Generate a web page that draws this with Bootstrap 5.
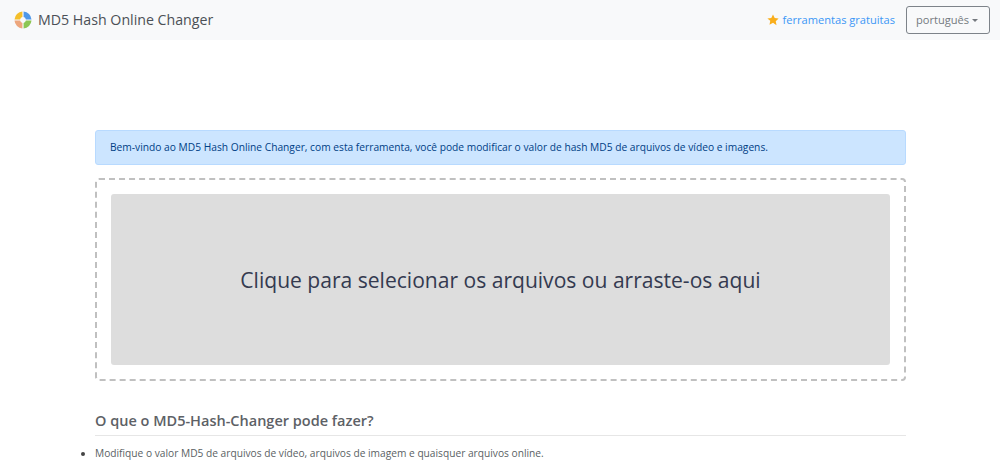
<!DOCTYPE html>
<html lang="pt">
<head>
<meta charset="utf-8">
<title>MD5 Hash Online Changer</title>
<link href="https://cdn.jsdelivr.net/npm/bootstrap@5.3.0/dist/css/bootstrap.min.css" rel="stylesheet">
<style>
html,body{height:460px;overflow:hidden}
body{font-family:"Open Sans","Noto Sans",sans-serif;color:#5a5f64;background:#fff}
.topbar{height:40px;padding:0 10px 0 14px;background:#f8f9fa}
.brand-link{font-size:14.2px;color:#4b5056;text-decoration:none;gap:6px}
.free-link{font-size:11.1px;color:#3b97f6;text-decoration:none;gap:4px;margin-right:11px}
.lang-btn{font-size:11.1px;color:#74797e;border:1px solid #7d8389;border-radius:3px;padding:0 9px;height:28px;width:84px;background:transparent;white-space:nowrap;display:flex;align-items:center}
.lang-btn.dropdown-toggle::after{margin-left:3px;border-top-width:3.4px;border-right-width:3.4px;border-left-width:3.4px}
.page-wrap{width:811px;margin:90px auto 0 95px}
.hello-box{height:35px;padding:0 14px;font-size:10.23px;line-height:33px;margin-bottom:13px;background:#cce5ff;border:1px solid #b8daff;color:#004085;border-radius:3px;white-space:nowrap}
.drop-frame{height:203px;border:2px dashed #c0c0c0;border-radius:4px;padding:14px}
.drop-area{height:100%;background:#ddd;border-radius:3px;font-size:21.07px;color:#343a50;padding-top:1px}
.sec-title{font-size:14.5px;font-weight:600;color:#5d6166;margin:30px 0 0;padding-bottom:4px;border-bottom:1px solid #e6e6e6;line-height:20px}
.feat-list{font-size:10.2px;margin:11px 0 0;padding-left:0;list-style:none}
.feat-list li{position:relative;line-height:13px;white-space:nowrap}
.feat-list li::before{content:"";position:absolute;left:-14px;top:5px;width:4px;height:4px;border-radius:50%;background:#444}
</style>
</head>
<body>
<nav class="navbar topbar d-flex justify-content-between align-items-center flex-nowrap">
  <a class="brand-link d-flex align-items-center" href="#">
    <svg width="18" height="18" viewBox="0 0 18 18" aria-hidden="true">
      <path d="M.5 8.4A8.5 8.5 0 0 1 8.4 .5V6.1A3 3 0 0 0 6.1 8.4Z" fill="#f4bf2a"/>
      <path d="M9.6 .5A8.5 8.5 0 0 1 17.5 8.4H11.9A3 3 0 0 0 9.6 6.1Z" fill="#4f98e8"/>
      <path d="M17.5 9.6A8.5 8.5 0 0 1 9.6 17.5V11.9A3 3 0 0 0 11.9 9.6Z" fill="#8cc653"/>
      <path d="M8.4 17.5A8.5 8.5 0 0 1 .5 9.6H6.1A3 3 0 0 0 8.4 11.9Z" fill="#eda67c"/>
    </svg>
    <span>MD5 Hash Online Changer</span>
  </a>
  <div class="d-flex align-items-center">
    <a class="free-link d-flex align-items-center" href="#">
      <svg width="12" height="12" viewBox="0 0 24 24" aria-hidden="true"><path d="M12 1l3.4 7.2 7.8 1-5.7 5.4 1.5 7.8L12 17.6l-7 3.8 1.5-7.8L.8 9.2l7.8-1z" fill="#f9ae1b"/></svg>
      <span>ferramentas gratuitas</span>
    </a>
    <div class="dropdown">
      <button class="btn lang-btn dropdown-toggle" type="button" data-bs-toggle="dropdown" aria-expanded="false">português</button>
      <ul class="dropdown-menu dropdown-menu-end">
        <li><a class="dropdown-item" href="#">português</a></li>
        <li><a class="dropdown-item" href="#">English</a></li>
      </ul>
    </div>
  </div>
</nav>
<main class="page-wrap">
  <div class="hello-box" role="alert">Bem-vindo ao MD5 Hash Online Changer, com esta ferramenta, você pode modificar o valor de hash MD5 de arquivos de vídeo e imagens.</div>
  <div class="drop-frame">
    <div class="drop-area d-flex align-items-center justify-content-center">Clique para selecionar os arquivos ou arraste-os aqui</div>
  </div>
  <h2 class="sec-title">O que o MD5-Hash-Changer pode fazer?</h2>
  <ul class="feat-list">
    <li>Modifique o valor MD5 de arquivos de vídeo, arquivos de imagem e quaisquer arquivos online.</li>
  </ul>
</main>
<script src="https://cdn.jsdelivr.net/npm/bootstrap@5.3.0/dist/js/bootstrap.bundle.min.js"></script>
</body>
</html>
